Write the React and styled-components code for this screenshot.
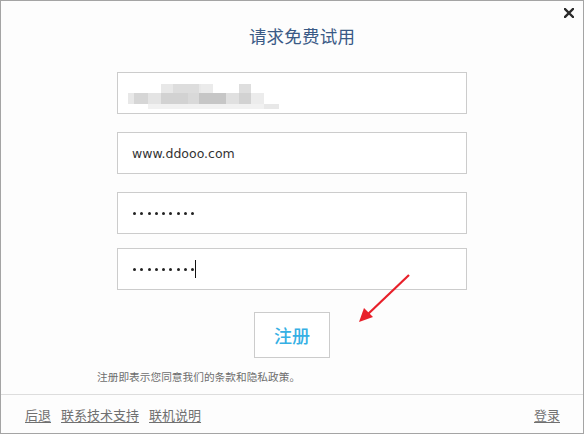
import styled, { createGlobalStyle } from "styled-components";

const Global = createGlobalStyle`
    html, body {
        margin: 0;
        padding: 0;
        background: #ffffff;
    }
    * {
        box-sizing: border-box;
    }
`

const blurBlocks = [
    [43, 11, 40, 9, "#e8e8e8"],
    [55, 11, 26, 9, "#dddddd"],
    [83, 11, 12, 9, "#ebebeb"],
    [121, 11, 12, 9, "#dedede"],
    [10, 20, 6, 11, "#e8e8e8"],
    [16, 20, 14, 11, "#d6d6d6"],
    [30, 20, 13, 11, "#e4e4e4"],
    [43, 20, 27, 11, "#d2d2d2"],
    [70, 20, 11, 11, "#d9d9d9"],
    [81, 20, 27, 11, "#c6c6c6"],
    [108, 20, 13, 11, "#e0e0e0"],
    [121, 20, 12, 11, "#d2d2d2"],
    [133, 20, 13, 11, "#ececec"],
    [30, 31, 116, 5, "#f1f1f1"],
    [146, 31, 15, 5, "#e8e8e8"],
]

function App() {
    return (
        <>
            <Global />
            <Window>
                <Close width="10" height="10" viewBox="0 0 10 10">
                    <path d="M1 1 L9 9 M9 1 L1 9" stroke="#2a2a2a" strokeWidth="2.4" strokeLinecap="square" />
                </Close>
                <Title>请求免费试用</Title>
                <Form>
                    <Field gap="18px">
                        <Blur width="170" height="40">
                            {blurBlocks.map(([x, y, w, h, c], i) => (
                                <rect key={i} x={x} y={y} width={w} height={h} fill={c} />
                            ))}
                        </Blur>
                    </Field>
                    <Field gap="18px">www.ddooo.com</Field>
                    <Field gap="14px"><Dots /></Field>
                    <Field><Dots /><Caret /></Field>
                    <Button>注册</Button>
                </Form>
                <Note>注册即表示您同意我们的条款和隐私政策。</Note>
                <Footer>
                    <Link>后退</Link>
                    <Link>联系技术支持</Link>
                    <Link>联机说明</Link>
                    <Spacer />
                    <Link>登录</Link>
                </Footer>
                <Arrow width="60" height="60" viewBox="0 0 60 60">
                    <line x1="56" y1="4" x2="14" y2="44" stroke="#e8202a" strokeWidth="2.2" />
                    <polygon points="6,51 11,37 20,46" fill="#e8202a" />
                </Arrow>
            </Window>
        </>
    )
}

function Dots() {
    return (
        <DotRow>
            {Array.from({ length: 9 }).map((_, i) => <Dot key={i} />)}
        </DotRow>
    )
}

const Window = styled.div`
    position: relative;
    width: 584px;
    height: 434px;
    border: 1px solid #a4a4a4;
    background: #fdfdfd;
    display: flex;
    flex-direction: column;
    font-family: "Noto Sans CJK SC", "DejaVu Sans", sans-serif;
`
const Close = styled.svg`
    position: absolute;
    top: 7px;
    right: 9px;
`
const Title = styled.div`
    margin-top: 22px;
    height: 26px;
    padding-left: 20px;
    text-align: center;
    font-size: 17.5px;
    line-height: 26px;
    color: #3a5a86;
    letter-spacing: 0.2px;
`
const Form = styled.div`
    margin-top: 23px;
    display: flex;
    flex-direction: column;
    align-items: center;
`
const Field = styled.div`
    position: relative;
    width: 350px;
    height: 42px;
    margin-bottom: ${props => props.gap || "0"};
    border: 1px solid #cccccc;
    background: #ffffff;
    display: flex;
    align-items: center;
    padding-left: 14px;
    font-family: "DejaVu Sans", sans-serif;
    font-size: 12.5px;
    color: #333333;
`
const Blur = styled.svg`
    position: absolute;
    left: 0;
    top: 0;
`
const DotRow = styled.div`
    display: flex;
    gap: 4.3px;
    margin-left: 1px;
`
const Dot = styled.span`
    width: 3px;
    height: 3px;
    border-radius: 50%;
    background: #222222;
`
const Caret = styled.span`
    width: 1px;
    height: 18px;
    margin-left: 1px;
    background: #111111;
`
const Button = styled.div`
    margin-top: 22px;
    width: 76px;
    height: 46px;
    border: 1px solid #cccccc;
    background: #ffffff;
    display: flex;
    align-items: center;
    justify-content: center;
    font-size: 18px;
    font-weight: 500;
    color: #36b0e4;
`
const Note = styled.div`
    margin-top: 11px;
    padding-left: 96px;
    font-family: "Noto Sans CJK SC", serif;
    font-size: 10.7px;
    line-height: 16px;
    color: #6e6e6e;
`
const Footer = styled.div`
    margin-top: auto;
    height: 39px;
    border-top: 1px solid #dddddd;
    display: flex;
    align-items: center;
    gap: 10px;
    padding: 0 23px 0 24px;
`
const Link = styled.span`
    font-size: 13px;
    color: #707070;
    text-decoration: underline;
    text-underline-offset: 2px;
`
const Spacer = styled.div`
    flex: 1;
`
const Arrow = styled.svg`
    position: absolute;
    left: 352px;
    top: 270px;
`

export default App;
